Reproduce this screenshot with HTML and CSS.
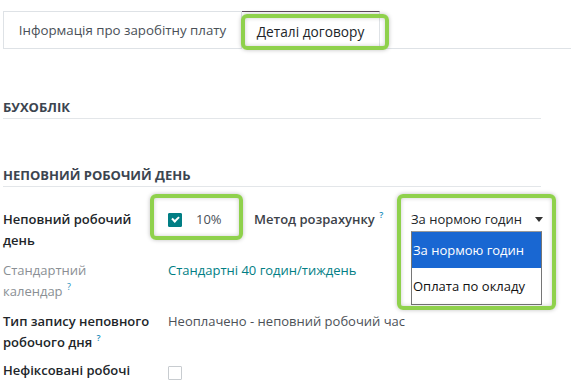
FILE: index.html
```html
<!DOCTYPE html>
<html lang="uk">
<head>
    <meta charset="UTF-8">
    <title>Деталі договору</title>
    <link rel="stylesheet" href="styles.css">
</head>
<body>
    <div class="sheet">
        <ul class="tabs">
            <li class="tab">Інформація про заробітну плату</li>
            <li class="tab active">Деталі договору<span class="mark mark-tab"></span></li>
        </ul>

        <h2 class="section first">Бухоблік</h2>
        <h2 class="section">Неповний робочий день</h2>

        <div class="fields">
            <div class="row">
                <div class="label">Неповний робочий день</div>
                <div class="value inline">
                    <div class="percent">
                        <span class="check checked"></span>
                        <span>10%</span>
                        <span class="mark mark-percent"></span>
                    </div>
                    <div class="label wage">Метод розрахунку <sup>?</sup></div>
                    <div class="select">
                        <span>За нормою годин</span>
                        <span class="caret"></span>
                        <ul class="options">
                            <li class="selected">За нормою годин</li>
                            <li>Оплата по окладу</li>
                        </ul>
                        <span class="mark mark-select"></span>
                    </div>
                </div>
            </div>
            <div class="row">
                <div class="label muted">Стандартний <span class="nowrap">календар <sup>?</sup></span></div>
                <div class="value link">Стандартні 40 годин/тиждень</div>
            </div>
            <div class="row tight">
                <div class="label">Тип запису неповного <span class="nowrap">робочого дня <sup>?</sup></span></div>
                <div class="value plain">Неоплачено - неповний робочий час</div>
            </div>
            <div class="row">
                <div class="label">Нефіксовані робочі</div>
                <div class="value"><span class="check"></span></div>
            </div>
        </div>
    </div>
</body>
</html>
```

FILE: styles.css
```css
* {
    margin: 0;
    padding: 0;
    box-sizing: border-box;
}

body {
    font-family: 'Open Sans', 'Noto Sans', sans-serif;
    font-size: 13px;
    line-height: 21px;
    color: #212529;
    background: white;
    overflow: hidden;
}

.sheet {
    padding: 11px 0 0 3px;
    width: 541px;
}

.nowrap {
    white-space: nowrap;
}

/* tabs */
.tabs {
    list-style: none;
    display: flex;
    border-bottom: 1px solid #dee2e6;
    margin-right: -30px;
}

.tab {
    height: 38px;
    padding: 0 10px;
    display: flex;
    align-items: center;
    justify-content: center;
    flex-shrink: 0;
    white-space: nowrap;
    font-size: 13.7px;
    color: #495057;
    border: 1px solid #dee2e6;
    border-bottom: none;
    margin-bottom: -1px;
    position: relative;
}

.tab:first-child {
    width: 239px;
    font-size: 13.3px;
}

.tab.active {
    color: #212529;
    width: 138px;
    border-left: none;
    border-top: 1px solid #5e4b5d;
    background: white;
    padding-top: 1px;
}

/* sections */
.section {
    font-size: 13px;
    font-weight: 700;
    text-transform: uppercase;
    color: #3c4550;
    border-bottom: 1px solid #e3e6e9;
    padding-bottom: 0;
    margin-top: 46px;
}

.section.first {
    margin-top: 48px;
}

/* fields */
.fields {
    margin-top: 22px;
}

.row {
    display: flex;
    margin-bottom: 9px;
}

.row.tight {
    margin-bottom: 7px;
}

.row .label {
    width: 165px;
    flex-shrink: 0;
    font-weight: 600;
    padding-right: 18px;
}

.row .label.muted {
    font-weight: 400;
    color: #8a8f94;
}

sup {
    font-size: 9px;
    color: #1b8dbb;
    vertical-align: top;
    line-height: 12px;
    margin-left: 1px;
}

.value {
    flex: 1;
}

.value.link {
    color: #017e84;
}

.value.plain {
    color: #4c5157;
}

.inline {
    display: flex;
    align-items: flex-start;
}

.percent {
    position: relative;
    display: flex;
    align-items: center;
    gap: 14px;
    width: 86px;
    color: #495057;
}

.check {
    display: inline-block;
    width: 14px;
    height: 14px;
    border: 1px solid #c8ccd0;
    border-radius: 1px;
    vertical-align: middle;
    margin-top: 3px;
    background: white;
}

.percent .check {
    margin-top: 0;
}

.check.checked {
    background: #017e84;
    border-color: #017e84;
    position: relative;
}

.check.checked::after {
    content: "";
    position: absolute;
    left: 3px;
    top: 2px;
    width: 5px;
    height: 3px;
    border-left: 2px solid white;
    border-bottom: 2px solid white;
    transform: rotate(-45deg);
}

.row .label.wage {
    width: 157px;
    padding-left: 0;
    color: #3c4249;
}

.select {
    position: relative;
    width: 134px;
    display: flex;
    justify-content: space-between;
    align-items: center;
    color: #212529;
}

.caret {
    width: 0;
    height: 0;
    border-left: 4px solid transparent;
    border-right: 4px solid transparent;
    border-top: 5px solid #333;
    margin-right: 2px;
}

.options {
    position: absolute;
    left: 0;
    top: 22px;
    width: 131px;
    list-style: none;
    background: white;
    border: 1px solid #767676;
    border-top-color: #999;
    z-index: 2;
}

.options li {
    height: 36px;
    line-height: 36px;
    padding-left: 1px;
    color: #111;
}

.options li.selected {
    background: #1967d2;
    color: white;
}

/* annotation frames */
.mark {
    position: absolute;
    border: 4px solid #8fd14c;
    border-radius: 6px;
    box-shadow: 0 0 4px rgba(0, 0, 0, 0.25), inset 0 0 4px rgba(0, 0, 0, 0.2);
    pointer-events: none;
    z-index: 3;
}

.mark-tab {
    left: -1px;
    top: 2px;
    width: 148px;
    height: 36px;
}

.mark-percent {
    left: -18px;
    top: -15px;
    width: 93px;
    height: 46px;
}

.mark-select {
    left: -14px;
    top: -15px;
    width: 159px;
    height: 116px;
}
```
